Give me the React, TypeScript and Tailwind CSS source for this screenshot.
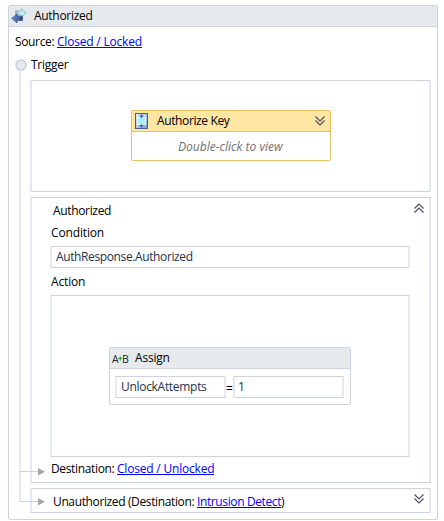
import type { ReactNode } from "react";

function Panel({ className, children }: { className: string; children?: ReactNode }) {
  return (
    <div className={`border-x-2 border-y border-x-[#e6e9f2] border-y-[#cdd2df] bg-white ${className}`}>
      {children}
    </div>
  );
}

function Link({ children, className = "" }: { children: ReactNode; className?: string }) {
  return <span className={`h-[14px] border-b border-[#0000ff] text-[#0000ff] ${className}`}>{children}</span>;
}

function Chevrons({ up = false }: { up?: boolean }) {
  return (
    <svg width="10" height="10" viewBox="0 0 10 10" className={`shrink-0 ${up ? "rotate-180" : ""}`} fill="none" stroke="#4b5162" strokeWidth="1.2">
      <path d="M.5 .5 5 5 9.5.5M.5 4.5 5 9 9.5 4.5" />
    </svg>
  );
}

function SwapIcon() {
  return (
    <svg width="16" height="16" viewBox="0 0 16 16" className="shrink-0">
      <defs>
        <linearGradient id="swapBack" x1="0" y1="0" x2="1" y2="0">
          <stop offset="0" stopColor="#8fa3b8" />
          <stop offset=".5" stopColor="#c8f2f8" />
          <stop offset="1" stopColor="#a6e6ee" />
        </linearGradient>
        <linearGradient id="swapFront" x1="0" y1="0" x2="1" y2="0">
          <stop offset="0" stopColor="#6f97d8" />
          <stop offset="1" stopColor="#2b4486" />
        </linearGradient>
      </defs>
      <path d="M4.5 2.8h5.7V.6L15.3 5l-5.1 4.4V7.3H4.5z" fill="url(#swapBack)" stroke="#8db4c2" strokeWidth=".8" />
      <path d="M11.5 8.2H6V6L.7 10.4 6 14.9v-2.4h5.5z" fill="url(#swapFront)" stroke="#3c5594" strokeWidth=".8" />
    </svg>
  );
}

function SequenceIcon() {
  return (
    <svg width="13" height="16" viewBox="0 0 13 16" className="shrink-0">
      <defs>
        <linearGradient id="seqFrame" x1="0" y1="0" x2="1" y2="1">
          <stop offset="0" stopColor="#e9f3fc" />
          <stop offset="1" stopColor="#7b9fce" />
        </linearGradient>
      </defs>
      <rect x=".5" y=".5" width="12" height="15" fill="url(#seqFrame)" stroke="#4a5f88" />
      <rect x="2.5" y="4.5" width="8" height="7" fill="#a5eefa" stroke="#eafaff" />
      <path d="M6.5 1v3M6.5 11v2" stroke="#3c6bc0" />
      <path d="M4 2.5h5L6.5 5.2zM4 12h5l-2.5 2.7z" fill="#3c6bc0" />
    </svg>
  );
}

function AssignIcon() {
  return (
    <span className="flex h-4 w-4 shrink-0 items-center pt-px font-['Open_Sans',sans-serif] text-[10.5px] leading-4 text-[#222]">
      <span className="w-[6px]">A</span>
      <svg width="4" height="6" viewBox="0 0 4 6" className="shrink-0">
        <path d="M0 2.5h4M2.3.5v4" stroke="#2ca44f" strokeWidth="1.2" />
      </svg>
      <span>B</span>
    </span>
  );
}

export default function App() {
  return (
    <div className="h-[521px] w-[444px] overflow-hidden bg-white pl-2 pt-[5px] font-['Open_Sans','Noto_Sans',sans-serif] text-[12px] leading-4 text-black">
      <div className="relative h-[515px] w-[430px] rounded-[2px] border border-[#cdd2df]">
        <div className="flex h-[21px] items-center border-b border-[#cdd2df] bg-[#e6eaed] pl-[2px]">
          <SwapIcon />
          <span className="-mt-px ml-[7px] whitespace-nowrap tracking-[-0.3px]">Authorized</span>
        </div>
        <div className="flex h-[30px] whitespace-nowrap pl-[6px] pt-[7px]">
          <span className="w-[42px] tracking-[-0.35px]">Source:</span>
          <Link className="tracking-[-0.2px]">Closed / Locked</Link>
        </div>
        <div className="flex h-[23px] items-start pl-[6px]">
          <svg width="12" height="12" viewBox="0 0 12 12" className="mt-[2px] shrink-0">
            <circle cx="6" cy="6" r="4.9" fill="#e6eaed" stroke="#cdd2df" strokeWidth="1.9" />
          </svg>
          <span className="ml-1 tracking-[-0.25px]">Trigger</span>
        </div>
        <div className="ml-[21px] flex w-[401px] flex-col">
          <Panel className="flex h-[112px] pl-[99px] pt-[29px]">
            <div className="h-[51px] w-[200px] rounded-[2px] border border-[#e5c365]">
              <div className="flex h-[21px] items-center border-b border-[#e5c365] bg-[#ffe6a3] pl-[3px] pr-[5px]">
                <SequenceIcon />
                <span className="-mt-px ml-[9px] grow whitespace-nowrap tracking-[-0.38px]">Authorize Key</span>
                <Chevrons />
              </div>
              <div className="whitespace-nowrap pl-[46px] pt-[7px] italic tracking-[0.02px] text-[#707070]">Double-click to view</div>
            </div>
          </Panel>
          <Panel className="mt-[5px] h-[286px] pl-[18px]">
            <div className="flex h-[48px] justify-between pr-[5px]">
              <div className="whitespace-nowrap pt-[5px]">
                <div className="pl-[3px] tracking-[-0.34px]">Authorized</div>
                <div className="mt-[6px] pl-px tracking-[-0.15px]">Condition</div>
              </div>
              <div className="pt-[5px]"><Chevrons up /></div>
            </div>
            <Panel className="h-[22px] w-[360px] rounded-[1px] pl-[4px] pt-[2px] text-[#26304a]">
              <span className="tracking-[-0.38px]">AuthResponse.Authorized</span>
            </Panel>
            <div className="h-[27px] pl-px pt-[6px] tracking-[-0.15px]">Action</div>
            <Panel className="h-[162px] w-[360px] pl-[57px] pt-[51px]">
              <div className="h-[58px] w-[242px] rounded-[2px] border border-[#cdd2df]">
                <div className="flex h-[21px] items-center border-b border-[#cdd2df] bg-[#e6eaed] pl-[2px]">
                  <AssignIcon />
                  <span className="-mt-px ml-[7px] tracking-[-0.2px]">Assign</span>
                </div>
                <div className="flex pl-[5px] pt-[7px] text-[#26304a]">
                  <Panel className="h-[22px] w-[111px] rounded-[1px] pl-[4px] pt-[2px]">
                    <span className="tracking-[-0.3px]">UnlockAttempts</span>
                  </Panel>
                  <span className="w-[7px] pt-[5px] text-center text-black">=</span>
                  <Panel className="h-[22px] w-[111px] rounded-[1px] pl-[3px] pt-[2px]">1</Panel>
                </div>
              </div>
            </Panel>
            <div className="flex whitespace-nowrap pl-px pt-[4px]">
              <span className="w-[66px] tracking-[-0.35px]">Destination:</span>
              <Link className="tracking-[-0.2px]">Closed / Unlocked</Link>
            </div>
          </Panel>
          <Panel className="mt-[5px] flex h-[25px] justify-between pl-[21px] pr-[5px]">
            <div className="flex whitespace-nowrap pt-[5px]">
              <span className="w-[144px] tracking-[-0.37px]">Unauthorized (Destination:</span>
              <Link className="tracking-[-0.38px]">Intrusion Detect</Link>
              <span>)</span>
            </div>
            <div className="pt-[5px]"><Chevrons /></div>
          </Panel>
        </div>
        <svg width="30" height="437" viewBox="0 0 30 437" className="absolute left-[10px] top-[65px]">
          <path d="M0 0h2v431H0z" fill="#e6e9f2" />
          <path d="M1 400.5h18M1 430.5h18" stroke="#cdd2df" />
          <path d="M19 397v7.5l7-3.75zM19 427v7.5l7-3.75z" fill="#a6a6a6" />
        </svg>
      </div>
    </div>
  );
}
